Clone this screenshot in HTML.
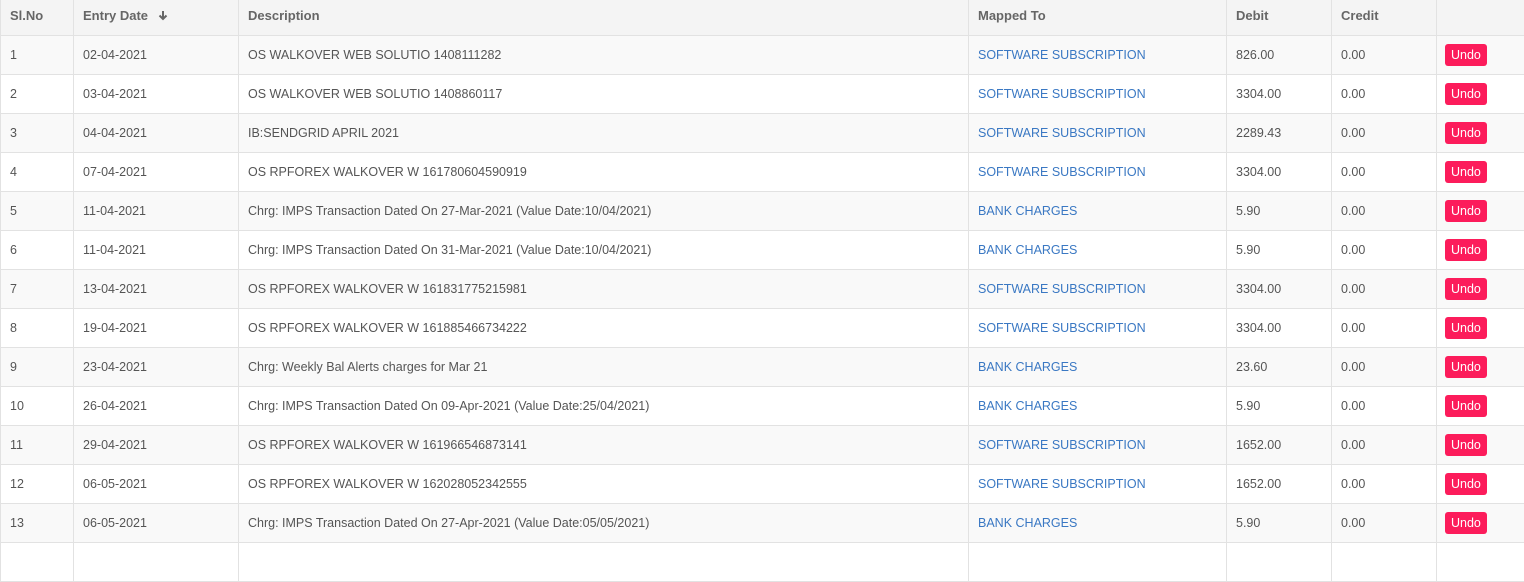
<!DOCTYPE html>
<html><head><style>
body{margin:0;background:#fff;font-family:"Liberation Sans",sans-serif;font-size:12.5px;color:#555;}
table{border-collapse:collapse;position:absolute;left:0;top:0;width:1524px;table-layout:fixed;}
td,th{border:1px solid #e2e2e2;padding:0 0 0 9px;text-align:left;white-space:nowrap;overflow:hidden;}
th{height:35px;background:#f4f4f4;font-weight:bold;color:#666;vertical-align:top;padding-top:8px;box-sizing:border-box;font-size:13px;}
td{height:38px;}
tr:nth-child(odd) td{background:#f9f9f9;}
tr:first-child th{border-top:none;}
.l{color:#3a78c3;}
.u{display:inline-block;background:#fc1c5b;color:#fff;border-radius:3px;padding:3px 6px 3px 6px;font-size:12.5px;line-height:16px;margin-left:-1px;}
.arr{display:inline-block;margin-left:10px;vertical-align:-1px;}
</style></head><body>
<table>
<colgroup><col style="width:73px"><col style="width:165px"><col style="width:730px"><col style="width:258px"><col style="width:105px"><col style="width:105px"><col style="width:88px"></colgroup>
<thead><tr><th>Sl.No</th><th>Entry Date<span class="arr"><svg width="10" height="11" viewBox="0 0 10 11"><path d="M5 1v8M1.5 5.5L5 9l3.5-3.5" stroke="#666" stroke-width="2" fill="none"/></svg></span></th><th>Description</th><th>Mapped To</th><th>Debit</th><th>Credit</th><th></th></tr></thead>
<tbody>
<tr><td>1</td><td>02-04-2021</td><td>OS WALKOVER WEB SOLUTIO 1408111282</td><td class="l">SOFTWARE SUBSCRIPTION</td><td>826.00</td><td>0.00</td><td><span class="u">Undo</span></td></tr>
<tr><td>2</td><td>03-04-2021</td><td>OS WALKOVER WEB SOLUTIO 1408860117</td><td class="l">SOFTWARE SUBSCRIPTION</td><td>3304.00</td><td>0.00</td><td><span class="u">Undo</span></td></tr>
<tr><td>3</td><td>04-04-2021</td><td>IB:SENDGRID APRIL 2021</td><td class="l">SOFTWARE SUBSCRIPTION</td><td>2289.43</td><td>0.00</td><td><span class="u">Undo</span></td></tr>
<tr><td>4</td><td>07-04-2021</td><td>OS RPFOREX WALKOVER W 161780604590919</td><td class="l">SOFTWARE SUBSCRIPTION</td><td>3304.00</td><td>0.00</td><td><span class="u">Undo</span></td></tr>
<tr><td>5</td><td>11-04-2021</td><td>Chrg: IMPS Transaction Dated On 27-Mar-2021 (Value Date:10/04/2021)</td><td class="l">BANK CHARGES</td><td>5.90</td><td>0.00</td><td><span class="u">Undo</span></td></tr>
<tr><td>6</td><td>11-04-2021</td><td>Chrg: IMPS Transaction Dated On 31-Mar-2021 (Value Date:10/04/2021)</td><td class="l">BANK CHARGES</td><td>5.90</td><td>0.00</td><td><span class="u">Undo</span></td></tr>
<tr><td>7</td><td>13-04-2021</td><td>OS RPFOREX WALKOVER W 161831775215981</td><td class="l">SOFTWARE SUBSCRIPTION</td><td>3304.00</td><td>0.00</td><td><span class="u">Undo</span></td></tr>
<tr><td>8</td><td>19-04-2021</td><td>OS RPFOREX WALKOVER W 161885466734222</td><td class="l">SOFTWARE SUBSCRIPTION</td><td>3304.00</td><td>0.00</td><td><span class="u">Undo</span></td></tr>
<tr><td>9</td><td>23-04-2021</td><td>Chrg: Weekly Bal Alerts charges for Mar 21</td><td class="l">BANK CHARGES</td><td>23.60</td><td>0.00</td><td><span class="u">Undo</span></td></tr>
<tr><td>10</td><td>26-04-2021</td><td>Chrg: IMPS Transaction Dated On 09-Apr-2021 (Value Date:25/04/2021)</td><td class="l">BANK CHARGES</td><td>5.90</td><td>0.00</td><td><span class="u">Undo</span></td></tr>
<tr><td>11</td><td>29-04-2021</td><td>OS RPFOREX WALKOVER W 161966546873141</td><td class="l">SOFTWARE SUBSCRIPTION</td><td>1652.00</td><td>0.00</td><td><span class="u">Undo</span></td></tr>
<tr><td>12</td><td>06-05-2021</td><td>OS RPFOREX WALKOVER W 162028052342555</td><td class="l">SOFTWARE SUBSCRIPTION</td><td>1652.00</td><td>0.00</td><td><span class="u">Undo</span></td></tr>
<tr><td>13</td><td>06-05-2021</td><td>Chrg: IMPS Transaction Dated On 27-Apr-2021 (Value Date:05/05/2021)</td><td class="l">BANK CHARGES</td><td>5.90</td><td>0.00</td><td><span class="u">Undo</span></td></tr>
<tr><td></td><td></td><td></td><td></td><td></td><td></td><td></td></tr>
</tbody></table>
</body></html>
